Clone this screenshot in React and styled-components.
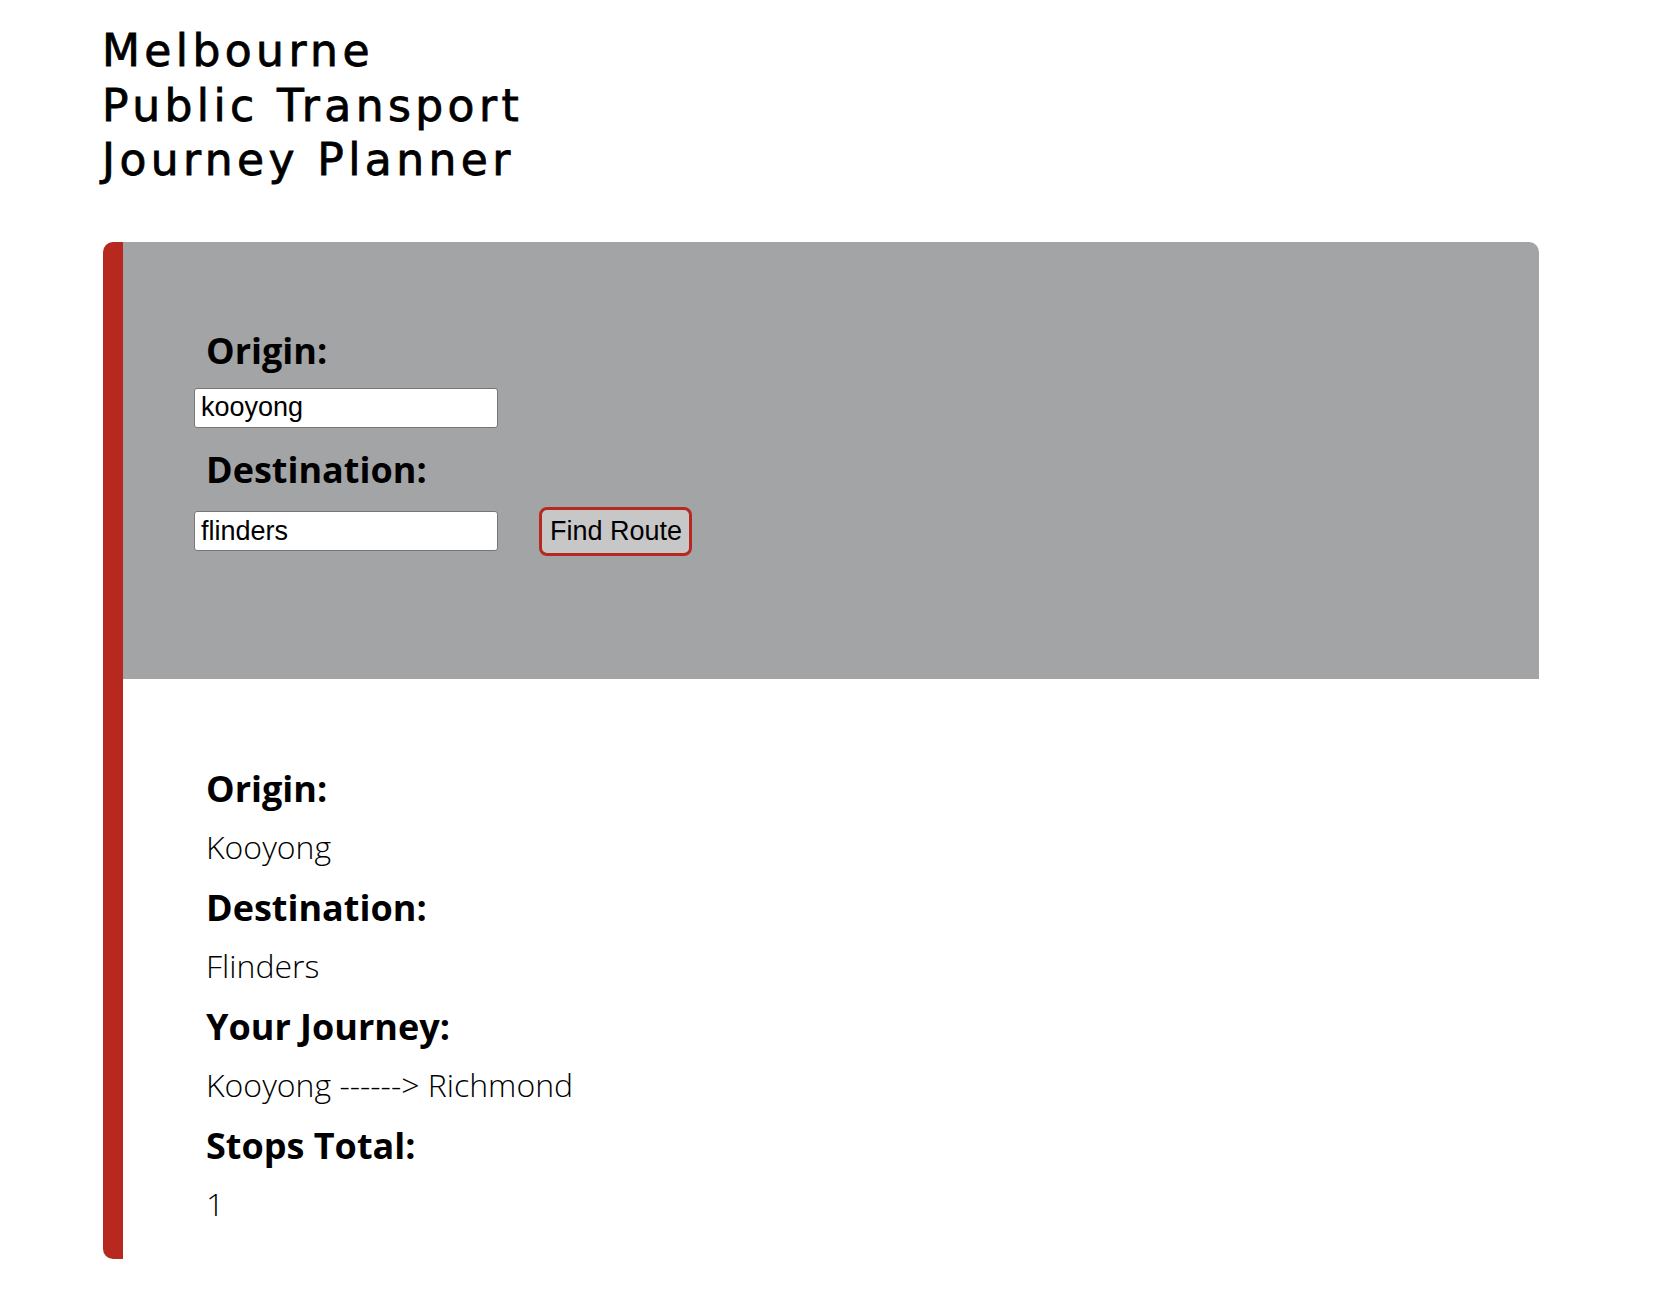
import React from "react";
import styled, { createGlobalStyle } from "styled-components";

const GlobalStyle = createGlobalStyle`
  *, *::before, *::after { box-sizing: border-box; }
  html, body { margin: 0; padding: 0; background: #ffffff; }
  body {
    font-family: "Open Sans", "Noto Sans", sans-serif;
    color: #000000;
  }
`;

const Page = styled.div`
  padding: 24px 116px 32px 103px;
`;

const Title = styled.h1`
  margin: 0 0 54px -1px;
  font-family: "DejaVu Sans", "Noto Sans", sans-serif;
  font-weight: 400;
  font-size: 44px;
  line-height: 54.5px;
  letter-spacing: 4.4px;
  color: #000;
  -webkit-text-stroke: 0.8px #000;
`;

const Card = styled.section`
  border-left: 20px solid #b7291f;
  border-radius: 10px;
  overflow: hidden;
  background: #ffffff;
`;

const SearchPanel = styled.form`
  display: flex;
  flex-direction: column;
  align-items: flex-start;
  background: #a3a4a6;
  padding: 87px 0 123px 71px;
`;

const FieldLabel = styled.label`
  display: block;
  margin: 0 0 15px 12px;
  font-family: "Open Sans", sans-serif;
  font-weight: 700;
  font-size: 36px;
  line-height: 44px;
`;

const FieldRow = styled.div`
  display: flex;
  align-items: center;
  gap: 41px;
  margin-bottom: ${(p) => (p.$last ? "0" : "20px")};
`;

const TextInput = styled.input`
  width: 304px;
  height: 40px;
  padding: 0 6px;
  border: 1px solid #767676;
  border-radius: 3px;
  background: #ffffff;
  font-family: "Liberation Sans", Arial, sans-serif;
  font-size: 27px;
  color: #000;
  outline: none;
`;

const FindButton = styled.button`
  height: 49px;
  padding: 0 7px 0 8px;
  border: 3px solid #b7291f;
  border-radius: 8px;
  background: #c8c7c8;
  font-family: "Liberation Sans", Arial, sans-serif;
  font-size: 27px;
  color: #000;
  cursor: pointer;
`;

const Results = styled.dl`
  margin: 0;
  padding: 88px 0 35px 83px;
`;

const ResultLabel = styled.dt`
  margin: ${(p) => (p.$first ? "0" : "18.5px")} 0 16.5px 0;
  font-weight: 700;
  font-size: 36px;
  line-height: 44px;
`;

const ResultValue = styled.dd`
  margin: 0;
  font-weight: 300;
  font-size: 32px;
  line-height: 40px;
`;

const results = [
  ["Origin:", "Kooyong"],
  ["Destination:", "Flinders"],
  ["Your Journey:", "Kooyong ------> Richmond"],
  ["Stops Total:", "1"],
];

export default function App() {
  return (
    <>
      <GlobalStyle />
      <Page>
        <Title>
          Melbourne
          <br />
          Public Transport
          <br />
          Journey Planner
        </Title>
        <Card>
          <SearchPanel onSubmit={(e) => e.preventDefault()}>
            <FieldLabel htmlFor="origin">Origin:</FieldLabel>
            <FieldRow>
              <TextInput id="origin" defaultValue="kooyong" />
            </FieldRow>
            <FieldLabel htmlFor="destination">Destination:</FieldLabel>
            <FieldRow $last>
              <TextInput id="destination" defaultValue="flinders" />
              <FindButton type="submit">Find Route</FindButton>
            </FieldRow>
          </SearchPanel>
          <Results>
            {results.map(([label, value], i) => (
              <React.Fragment key={label}>
                <ResultLabel $first={i === 0}>{label}</ResultLabel>
                <ResultValue>{value}</ResultValue>
              </React.Fragment>
            ))}
          </Results>
        </Card>
      </Page>
    </>
  );
}
